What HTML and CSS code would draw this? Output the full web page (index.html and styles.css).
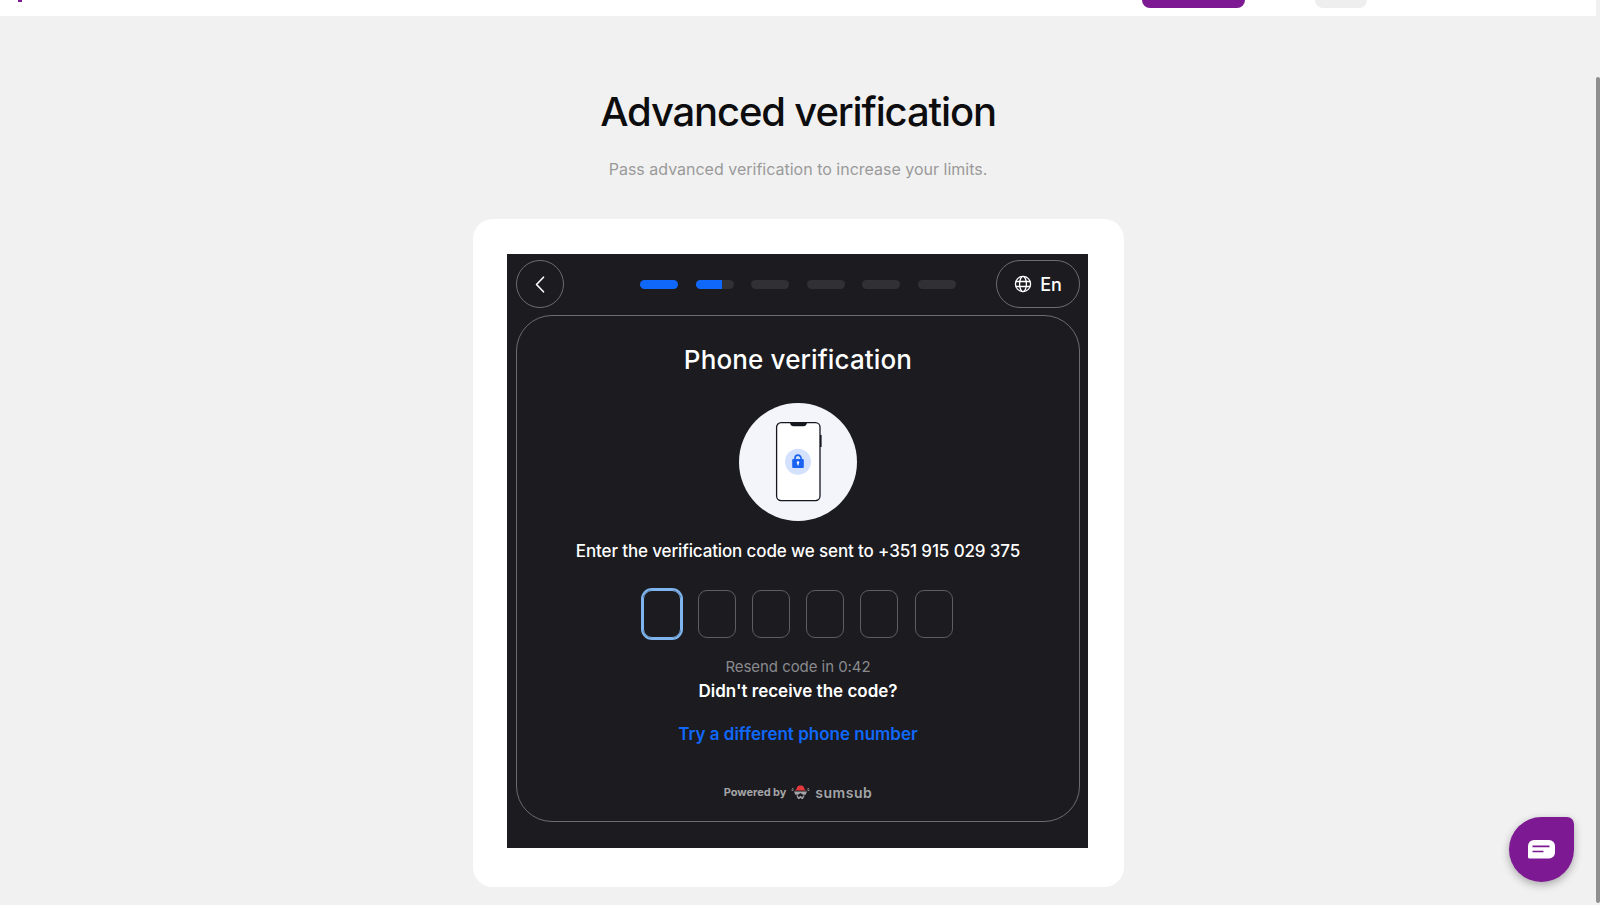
FILE: index.html
```html
<!DOCTYPE html>
<html>
<head>
    <meta name="viewport" content="width=device-width, initial-scale=1" />
    <title>Advanced verification</title>
    <link rel="stylesheet" href="styles.css">
</head>

<body>

<div class="app">
    <div class="page">
        <header class="topbar">
            <span class="logo-stub"></span>
            <span class="btn-primary"></span>
            <span class="btn-grey"></span>
        </header>

        <main class="content">
            <h1 class="title">Advanced verification</h1>
            <p class="subtitle">Pass advanced verification to increase your limits.</p>

            <div class="card">
                <div class="sdk">
                    <div class="sdk-top">
                        <button class="back-button">
                            <svg width="10" height="17" viewBox="0 0 10 17"><path d="M8.5 1.2 1.5 8.5l7 7.3" fill="none" stroke="#fff" stroke-width="1.6" stroke-linecap="round" stroke-linejoin="round"/></svg>
                        </button>
                        <div class="steps">
                            <span class="step step-done"></span>
                            <span class="step"><span class="step-fill"></span></span>
                            <span class="step"></span>
                            <span class="step"></span>
                            <span class="step"></span>
                            <span class="step"></span>
                        </div>
                        <button class="lang-button">
                            <svg width="18" height="18" viewBox="0 0 18 18" fill="none" stroke="#fff" stroke-width="1.3">
                                <circle cx="9" cy="9" r="7.6"/>
                                <ellipse cx="9" cy="9" rx="3.4" ry="7.6"/>
                                <path d="M1.8 6.5h14.4M1.8 11.5h14.4"/>
                            </svg>
                            En
                        </button>
                    </div>

                    <div class="sdk-panel">
                        <h2 class="panel-title">Phone verification</h2>

                        <div class="illustration">
                            <svg width="50" height="82" viewBox="0 0 50 82">
                                <rect x="47" y="14" width="1.6" height="12" fill="#15171f"/>
                                <rect x="3.6" y="1.6" width="43.4" height="78" rx="4.5" fill="#fff" stroke="#15171f" stroke-width="1.3"/>
                                <path d="M17 2h17c-.6 2.2-1.6 3.2-3.6 3.2H20.6C18.6 5.2 17.6 4.2 17 2z" fill="#15171f"/>
                                <circle cx="25" cy="40.7" r="13" fill="#d3e1fc"/>
                                <path d="M22 38v-.8a3 3 0 0 1 6 0v.8" fill="none" stroke="#1a62f2" stroke-width="1.7"/>
                                <rect x="19.2" y="38" width="11.6" height="9" rx="1" fill="#1a62f2"/>
                                <circle cx="25" cy="41.5" r="1.2" fill="#fff"/>
                                <rect x="24.4" y="41.5" width="1.2" height="2.8" fill="#fff"/>
                            </svg>
                        </div>

                        <p class="panel-text">Enter the verification code we sent to +351 915 029 375</p>

                        <div class="code-row">
                            <span class="code-cell code-cell-active"></span>
                            <span class="code-cell"></span>
                            <span class="code-cell"></span>
                            <span class="code-cell"></span>
                            <span class="code-cell"></span>
                            <span class="code-cell"></span>
                        </div>

                        <p class="resend">Resend code in 0:42</p>
                        <p class="no-code">Didn't receive the code?</p>
                        <a class="other-number">Try a different phone number</a>

                        <div class="powered">
                            <span class="powered-label">Powered by</span>
                            <svg width="19" height="14" viewBox="0 0 19 14">
                                <path d="M3.5 5.5C5 4.8 5.5 4.5 6 2.5 6.4 1 7.5.5 9.5.5s3.1.5 3.5 2c.5 2 1 2.3 2.5 3z" fill="#e5383b"/>
                                <path d="M.5 5l1.8.5M1.5 3l.8 1.5M18.5 5l-1.8.5M17.5 3l-.8 1.5" stroke="#a5a5a8" stroke-width="1"/>
                                <path d="M3 6.5h13l-1.3 3.3H12L9.500 8 7 9.800H4.300z" fill="#a5a5a8"/>
                                <path d="M6 10.500l1.700 3 1.800-1.800 1.800 1.800 1.700-3" fill="none" stroke="#a5a5a8" stroke-width="1.500"/>
                            </svg>
                            <span class="powered-brand">sumsub</span>
                        </div>
                    </div>
                </div>
            </div>
        </main>
    </div>

    <div class="scrollbar"><span class="scrollbar-thumb"></span></div>
</div>

<a class="chat-button">
    <svg width="27" height="19" viewBox="0 0 27 19">
        <path d="M6 0h15a6 6 0 0 1 6 6v6.500a6 6 0 0 1-6 6H1.500A1.500 1.500 0 0 1 0 17V6a6 6 0 0 1 6-6z" fill="#fff"/>
        <path d="M4.500 6.300h17M4.500 11.500h11" stroke="#7d1a93" stroke-width="1.700"/>
    </svg>
</a>

</body>
</html>
```

FILE: styles.css
```css
* {
    box-sizing: border-box;
}

body {
    margin: 0;
    background-color: #f1f1f1;
    font-family: Inter, "Noto Sans", Arial, sans-serif;
    color: #0d0d0f;
}

p,
h1,
h2 {
    margin: 0;
}

button {
    font-family: inherit;
    background: none;
    cursor: pointer;
}

.app {
    display: flex;
    height: 100vh;
    overflow: hidden;
}

.page {
    flex: 1;
    min-width: 0;
}

.topbar {
    display: flex;
    height: 16px;
    background-color: #ffffff;
}

.logo-stub {
    width: 4px;
    height: 2px;
    margin-left: 18px;
    background-color: #7d1a93;
}

.btn-primary {
    width: 103px;
    height: 8px;
    margin-left: 1120px;
    background-color: #7d1a93;
    border-radius: 0 0 8px 8px;
}

.btn-grey {
    width: 52px;
    height: 8px;
    margin-left: 70px;
    background-color: #eeeeee;
    border-radius: 0 0 8px 8px;
}

.content {
    display: flex;
    flex-direction: column;
    align-items: center;
    padding-top: 72px;
}

.title {
    font-size: 40px;
    line-height: 48px;
    font-weight: 550;
    letter-spacing: -1.15px;
}

.subtitle {
    margin-top: 21px;
    font-size: 16px;
    line-height: 24px;
    color: #9a9a9a;
}

.card {
    margin-top: 38px;
    padding: 35px 35.5px 39px 34.5px;
    width: 651px;
    background-color: #ffffff;
    border-radius: 20px;
}

.sdk {
    height: 594px;
    padding: 6px 8px 6px 9px;
    background-color: #1b1b20;
    color: #ffffff;
}

.sdk-top {
    display: grid;
    grid-template-columns: 1fr auto 1fr;
    align-items: center;
    height: 48px;
}

.back-button {
    display: flex;
    align-items: center;
    justify-content: center;
    width: 48px;
    height: 48px;
    padding: 0;
    border: 1px solid #6d6d71;
    border-radius: 50%;
}

.steps {
    display: flex;
    gap: 17.5px;
}

.step {
    display: block;
    width: 38px;
    height: 9px;
    background-color: #303035;
    border-radius: 5px;
    overflow: hidden;
}

.step-done,
.step-fill {
    background-color: #1068fa;
}

.step-fill {
    display: block;
    width: 26px;
    height: 100%;
}

.lang-button {
    display: flex;
    align-items: center;
    justify-content: center;
    justify-self: end;
    gap: 8px;
    width: 84px;
    height: 48px;
    padding: 0;
    border: 1px solid #6d6d71;
    border-radius: 24px;
    color: #ffffff;
    font-size: 18px;
    font-weight: 500;
}

.sdk-panel {
    display: flex;
    flex-direction: column;
    align-items: center;
    height: 507px;
    margin-top: 7px;
    padding-top: 26px;
    border: 1px solid #6d6d71;
    border-radius: 36px;
}

.panel-title {
    font-size: 26px;
    line-height: 36px;
    font-weight: 500;
    letter-spacing: 0.14px;
}

.illustration {
    display: flex;
    align-items: center;
    justify-content: center;
    width: 118px;
    height: 118px;
    margin-top: 25px;
    background-color: #f3f5fb;
    border-radius: 50%;
}

.panel-text {
    margin-top: 17px;
    font-size: 17px;
    line-height: 26px;
    font-weight: 500;
    letter-spacing: -0.13px;
}

.code-row {
    display: flex;
    gap: 16.3px;
    margin-top: 26px;
}

.code-cell {
    width: 38px;
    height: 48px;
    border: 1px solid #5e5e62;
    border-radius: 9px;
}

.code-cell-active {
    border-color: #7fb5ee;
    box-shadow: 0 0 0 2px #7fb5ee;
}

.resend {
    margin-top: 17px;
    font-size: 15px;
    line-height: 24px;
    letter-spacing: -0.05px;
    color: #8a8a8e;
}

.no-code {
    font-size: 17px;
    line-height: 24px;
    font-weight: 600;
}

.other-number {
    margin-top: 18px;
    font-size: 17px;
    line-height: 26px;
    font-weight: 600;
    color: #1068fa;
}

.powered {
    display: flex;
    align-items: center;
    gap: 5px;
    margin-top: 37px;
    height: 16px;
    color: #a5a5a8;
}

.powered-label {
    font-size: 11px;
    font-weight: 700;
    letter-spacing: -0.05px;
}

.powered-brand {
    font-size: 14px;
    font-weight: 600;
    letter-spacing: 0.5px;
}

.scrollbar {
    display: flex;
    flex-direction: column;
    width: 4px;
    padding-top: 77px;
}

.scrollbar-thumb {
    flex: 1;
    margin-bottom: 2px;
    background-color: #8f8f8f;
    border-radius: 2px;
}

.chat-button {
    position: fixed;
    left: 1509px;
    top: 817px;
    display: flex;
    align-items: center;
    justify-content: center;
    width: 65px;
    height: 65px;
    background-color: #7d1a93;
    border-radius: 50% 7px 50% 50%;
    box-shadow: 0 3px 8px rgba(0, 0, 0, 0.3);
}
```
